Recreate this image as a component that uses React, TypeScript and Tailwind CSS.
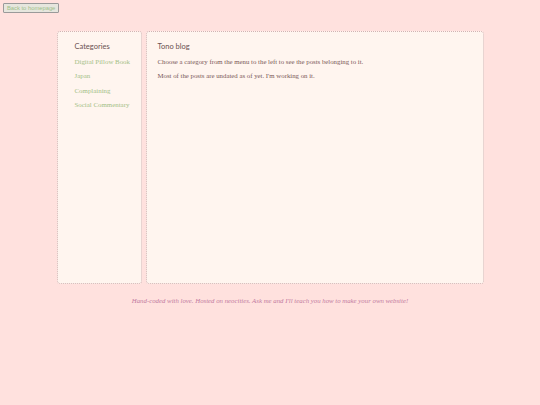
const categories = ["Digital Pillow Book", "Japan", "Complaining", "Social Commentary"];

export default function App() {
  return (
    <div className="min-h-[405px] w-full bg-[#ffe1de] pt-[3px] leading-none font-['Liberation_Serif',serif]">
      <div className="flex px-[3px]">
        <button className="h-[10px] px-[3px] border border-[#9a9a9a] bg-[#e6e6de] text-[#9fc08a] text-[5.8px] leading-[8px] rounded-[1px] font-['Liberation_Sans']">
          Back to homepage
        </button>
      </div>

      <div className="mx-auto mt-[18px] flex w-[427px] gap-[4px]">
        <aside className="h-[253px] w-[85px] shrink-0 rounded-[3px] border border-dotted border-[#d2b3b3] bg-[#fff5ef] pl-[17px] pt-[10px]">
          <h2 className="text-[7.5px] leading-[10px] text-[#6b5252] font-['Lato',sans-serif]">Categories</h2>
          <ul className="mt-[3px] flex flex-col">
            {categories.map(c => (
              <li key={c} className="text-[6.9px] leading-[14.3px] text-[#a3bf86]">{c}</li>
            ))}
          </ul>
        </aside>

        <main className="h-[253px] flex-1 rounded-[3px] border border-dotted border-[#d2b3b3] bg-[#fff5ef] pl-[11px] pt-[10px]">
          <h1 className="text-[7.5px] leading-[10px] text-[#6b5252] font-['Lato',sans-serif]">Tono blog</h1>
          <p className="mt-[3px] text-[6.8px] leading-[14.3px] text-[#7a5858]">
            Choose a category from the menu to the left to see the posts belonging to it.
          </p>
          <p className="text-[6.8px] leading-[14.3px] text-[#7a5858]">
            Most of the posts are undated as of yet. I'm working on it.
          </p>
        </main>
      </div>

      <footer className="mt-[12px] text-center text-[6.8px] leading-[10px] italic text-[#c27aa0]">
        Hand-coded with love. Hosted on neocities. Ask me and I'll teach you how to make your own website!
      </footer>
    </div>
  );
}
